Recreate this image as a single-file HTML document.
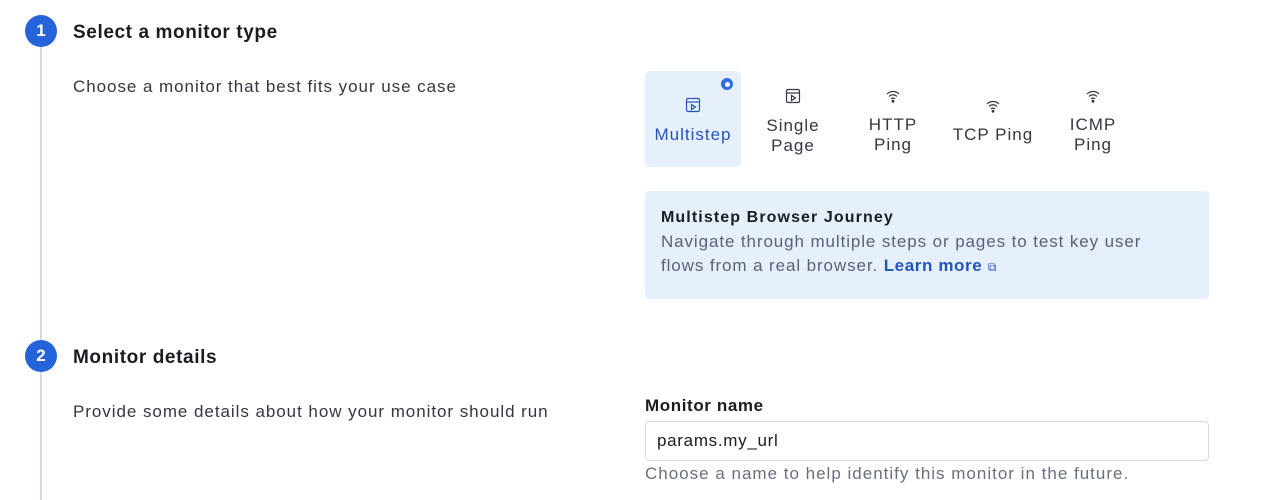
<!DOCTYPE html>
<html><head><meta charset="utf-8"><style>
*{margin:0;padding:0;box-sizing:border-box}
body{width:1262px;height:498px;background:#fff;font-family:"Liberation Sans",sans-serif;color:#1a1c21;position:relative;overflow:hidden}
.a{position:absolute;white-space:nowrap}
.circ{width:32px;height:32px;border-radius:50%;background:#2563d8;color:#fff;font-weight:bold;font-size:17px;text-align:center;line-height:32px}
.h{font-size:19px;font-weight:bold;color:#1a1c21;letter-spacing:0.6px}
.p{font-size:17px;color:#343741;letter-spacing:0.95px}
.tile{position:absolute;top:71px;width:96px;height:96px;text-align:center;font-size:17px;line-height:20px;color:#343741;font-weight:500;letter-spacing:1px}
.tile svg{display:block;margin:0 auto}
</style></head><body>
<div class="a" style="left:40px;top:40px;width:2px;height:460px;background:#d3dae6"></div>
<div class="a circ" style="left:25px;top:15px">1</div>
<div class="a h" style="left:73px;top:22px">Select a monitor type</div>
<div class="a p" style="left:73px;top:77px">Choose a monitor that best fits your use case</div>

<div class="tile" style="left:645px;background:#e6effc;border-radius:5px;color:#2554b8">
 <div class="a" style="left:76px;top:7px;width:12px;height:12px;border-radius:50%;background:#2f6fe0"></div>
 <div class="a" style="left:79.5px;top:10.5px;width:5px;height:5px;border-radius:50%;background:#fff"></div>
 <svg style="margin-top:26px" width="16" height="16" viewBox="0 0 16 16" fill="none" stroke="#2554b8" stroke-width="1.2"><rect x="1.5" y="1.5" width="13" height="13" rx="1.5"/><line x1="1.5" y1="5" x2="14.5" y2="5"/><path d="M6.5 7.5v5l4-2.5z"/></svg>
 <div style="margin-top:12px">Multistep</div>
</div>
<div class="tile" style="left:745px">
 <svg style="margin-top:17px" width="16" height="16" viewBox="0 0 16 16" fill="none" stroke="#343741" stroke-width="1.2"><rect x="1.5" y="1.5" width="13" height="13" rx="1.5"/><line x1="1.5" y1="5" x2="14.5" y2="5"/><path d="M6.5 7.5v5l4-2.5z"/></svg>
 <div style="margin-top:12px">Single<br>Page</div>
</div>
<div class="tile" style="left:845px">
 <svg style="margin-top:18px" width="16" height="14" viewBox="0 0 16 14" fill="none" stroke="#343741" stroke-width="1.2"><path d="M2 5a8.5 8.5 0 0 1 12 0M4 7.5a5.5 5.5 0 0 1 8 0M6 10a2.8 2.8 0 0 1 4 0"/><circle cx="8" cy="12.2" r=".8" fill="#343741"/></svg>
 <div style="margin-top:12px">HTTP<br>Ping</div>
</div>
<div class="tile" style="left:945px">
 <svg style="margin-top:28px" width="16" height="14" viewBox="0 0 16 14" fill="none" stroke="#343741" stroke-width="1.2"><path d="M2 5a8.5 8.5 0 0 1 12 0M4 7.5a5.5 5.5 0 0 1 8 0M6 10a2.8 2.8 0 0 1 4 0"/><circle cx="8" cy="12.2" r=".8" fill="#343741"/></svg>
 <div style="margin-top:12px">TCP Ping</div>
</div>
<div class="tile" style="left:1045px">
 <svg style="margin-top:18px" width="16" height="14" viewBox="0 0 16 14" fill="none" stroke="#343741" stroke-width="1.2"><path d="M2 5a8.5 8.5 0 0 1 12 0M4 7.5a5.5 5.5 0 0 1 8 0M6 10a2.8 2.8 0 0 1 4 0"/><circle cx="8" cy="12.2" r=".8" fill="#343741"/></svg>
 <div style="margin-top:12px">ICMP<br>Ping</div>
</div>

<div class="a" style="left:645px;top:191px;width:564px;height:108px;background:#e6effc;border-radius:4px;padding:17px 16px">
 <div style="font-size:16px;font-weight:bold;color:#1a1c21;line-height:20px;letter-spacing:1.1px">Multistep Browser Journey</div>
 <div style="font-size:17px;color:#5a6275;line-height:24px;margin-top:2px;letter-spacing:0.9px">Navigate through multiple steps or pages to test key user<br>flows from a real browser. <span style="color:#2554b8;font-weight:bold;letter-spacing:0.6px">Learn more</span> <span style="color:#2554b8;font-size:12px">&#x29C9;</span></div>
</div>

<div class="a circ" style="left:25px;top:340px">2</div>
<div class="a h" style="left:73px;top:347px">Monitor details</div>
<div class="a p" style="left:73px;top:402px">Provide some details about how your monitor should run</div>
<div class="a" style="left:645px;top:396px;font-size:17px;font-weight:bold;color:#1a1c21;letter-spacing:0.6px">Monitor name</div>
<div class="a" style="left:645px;top:421px;width:564px;height:40px;border:1px solid #d3dae6;border-radius:4px;padding:0 11px;line-height:38px;font-size:17px;color:#1a1c21;letter-spacing:0.7px">params.my_url</div>
<div class="a" style="left:645px;top:464px;font-size:17px;color:#69707d;letter-spacing:1px">Choose a name to help identify this monitor in the future.</div>
</body></html>
